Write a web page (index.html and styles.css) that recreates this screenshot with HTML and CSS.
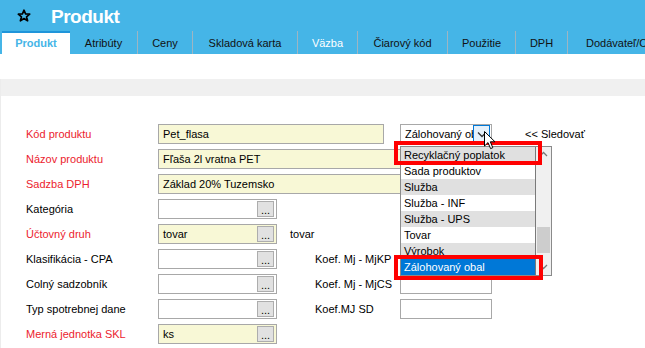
FILE: index.html
```html
<!DOCTYPE html>
<html lang="sk">
<head>
  <meta charset="UTF-8" />
  <meta name="viewport" content="width=device-width, initial-scale=1.0"/>
  <title>Produkt</title>
  <link rel="stylesheet" href="styles.css">
</head>
<body>
  <div class="header">
    <div class="title-bar">
      <svg class="star" width="14" height="13" viewBox="0 0 14 13">
        <polygon points="7,1.2 8.6,5 12.7,5.2 9.5,7.8 10.6,11.8 7,9.6 3.4,11.8 4.5,7.8 1.3,5.2 5.4,5" fill="none" stroke="#000" stroke-width="1.7" stroke-linejoin="round"/>
      </svg>
      <h1>Produkt</h1>
    </div>
    <div class="tabs">
      <div class="tab active">Produkt</div>
      <div class="tab">Atribúty</div>
      <div class="tab">Ceny</div>
      <div class="tab">Skladová karta</div>
      <div class="tab light">Väzba</div>
      <div class="tab">Čiarový kód</div>
      <div class="tab">Použitie</div>
      <div class="tab">DPH</div>
      <div class="tab">Dodávateľ/Odberateľ</div>
    </div>
  </div>

  <div class="content">
    <div class="band"></div>

    <div class="form">
      <div class="row">
        <span class="lbl req">Kód produktu</span>
        <div class="fld wide yellow">Pet_flasa</div>
        <div class="combo">
          <div class="combo-box yellow">
            <span class="combo-text">Zálohovaný obal</span>
            <span class="combo-btn">
              <svg width="10" height="7" viewBox="0 0 10 7"><polyline points="1,1.5 5,5.5 9,1.5" fill="none" stroke="#333" stroke-width="1.3"/></svg>
            </span>
          </div>

          <!-- open dropdown -->
          <div class="droplist">
            <ul class="items">
              <li class="alt">Recyklačný poplatok</li>
              <li>Sada produktov</li>
              <li class="alt">Služba</li>
              <li>Služba - INF</li>
              <li class="alt">Služba - UPS</li>
              <li>Tovar</li>
              <li class="alt">Výrobok</li>
              <li class="selected">Zálohovaný obal</li>
            </ul>
            <div class="scrollbar">
              <svg class="arrow-up" width="9" height="6" viewBox="0 0 9 6"><polyline points="1,5 4.5,1.5 8,5" fill="none" stroke="#777" stroke-width="1.3"/></svg>
              <div class="thumb"></div>
              <svg class="arrow-down" width="9" height="6" viewBox="0 0 9 6"><polyline points="1,1 4.5,4.5 8,1" fill="none" stroke="#777" stroke-width="1.3"/></svg>
            </div>
          </div>
          <div class="mark mark-top"></div>
          <div class="mark mark-bottom"></div>

          <svg class="cursor" width="12" height="19" viewBox="0 0 12 19">
            <path d="M0.5,0.5 L0.5,15 L4,11.6 L6.6,17.6 L8.8,16.7 L6.3,10.8 L11,10.8 Z" fill="#fff" stroke="#000" stroke-width="1" stroke-linejoin="round"/>
          </svg>
        </div>
        <span class="follow">&lt;&lt; Sledovať</span>
      </div>

      <div class="row">
        <span class="lbl req">Názov produktu</span>
        <div class="fld wider yellow">Fľaša 2l vratna PET</div>
      </div>

      <div class="row">
        <span class="lbl req">Sadzba DPH</span>
        <div class="fld wider yellow">Základ 20% Tuzemsko</div>
      </div>

      <div class="row">
        <span class="lbl">Kategória</span>
        <div class="fld pick"><span></span><span class="dots">...</span></div>
      </div>

      <div class="row">
        <span class="lbl req">Účtovný druh</span>
        <div class="fld pick yellow"><span>tovar</span><span class="dots">...</span></div>
        <span class="note">tovar</span>
      </div>

      <div class="row">
        <span class="lbl">Klasifikácia - CPA</span>
        <div class="fld pick"><span></span><span class="dots">...</span></div>
        <span class="koef">Koef. Mj - MjKP</span>
        <div class="fld small"></div>
      </div>

      <div class="row">
        <span class="lbl">Colný sadzobník</span>
        <div class="fld pick"><span></span><span class="dots">...</span></div>
        <span class="koef">Koef. Mj - MjCS</span>
        <div class="fld small"></div>
      </div>

      <div class="row">
        <span class="lbl">Typ spotrebnej dane</span>
        <div class="fld pick"><span></span><span class="dots">...</span></div>
        <span class="koef">Koef.MJ SD</span>
        <div class="fld small"></div>
      </div>

      <div class="row">
        <span class="lbl req">Merná jednotka SKL</span>
        <div class="fld pick yellow"><span>ks</span><span class="dots">...</span></div>
      </div>
    </div>
  </div>
</body>
</html>
```

FILE: styles.css
```css
body {
  margin: 0;
  overflow: hidden;
  font-family: "Liberation Sans", Arial, sans-serif;
  font-size: 11px;
  color: #000;
  background: #fff;
}

/* Header + tabs */
.header {
  background-color: #45b5e7;
}

.title-bar {
  height: 29px;
  padding: 2px 0 0 17px;
  display: flex;
  align-items: center;
}

.star {
  margin-top: -3px;
}

.title-bar h1 {
  margin: 0 0 0 20px;
  font-size: 19px;
  line-height: 1;
  letter-spacing: -0.5px;
  font-weight: bold;
  color: #fff;
}

.tabs {
  display: grid;
  grid-template-columns: 68px 67px 55px 105px 60px 90px 68px 52px 1fr;
  height: 23px;
  padding-left: 2px;
  white-space: nowrap;
}

.tab {
  box-sizing: border-box;
  height: 23px;
  padding-top: 2px;
  line-height: 21px;
  text-align: center;
  color: #111;
  border-left: 1px solid #9db5c3;
}

.tab.active,
.tab.active + .tab {
  border-left: none;
}

.tab.active {
  padding-top: 0;
  background: #fff;
  border-top: 2px solid #1f95da;
  color: #45b5e7;
  font-weight: bold;
}

.tab.light {
  color: #fff;
}

.tab:last-child {
  text-align: left;
  padding-left: 18px;
  overflow: hidden;
}

/* Content */
.content {
  border-left: 1px solid #ececec;
  min-height: 300px;
}

.band {
  margin-top: 25px;
  height: 17px;
  background: #f0f0f0;
}

.form {
  padding: 28px 0 0 25px;
}

.row {
  display: flex;
  align-items: center;
  height: 20px;
  margin-bottom: 5px;
}

.lbl {
  width: 132px;
  flex: none;
}

.lbl.req {
  color: #ec1c2e;
}

.fld {
  box-sizing: border-box;
  height: 20px;
  width: 119px;
  flex: none;
  padding: 0 4px;
  display: flex;
  align-items: center;
  border: 1px solid #a8a8a8;
  background: #fff;
  white-space: nowrap;
}

.fld.yellow {
  background: #f8f8d6;
}

.fld.wide {
  width: 226px;
}

.fld.wider {
  width: 334px;
}

.fld.small {
  width: 92px;
}

.fld.pick {
  justify-content: space-between;
  padding-right: 2px;
}

.dots {
  box-sizing: border-box;
  width: 17px;
  height: 16px;
  line-height: 16px;
  text-align: center;
  background: #e1e1e1;
  border: 1px solid #adadad;
}

.note {
  margin-left: 13px;
}

.koef {
  margin-left: 38px;
  width: 85px;
}

.follow {
  margin-left: 33px;
}

/* Combobox with open list */
.combo {
  position: relative;
  margin-left: 16px;
  width: 92px;
  height: 20px;
}

.combo-box {
  box-sizing: border-box;
  height: 20px;
  display: flex;
  align-items: center;
  padding: 0 1px 0 4px;
  border: 1px solid #a8a8a8;
}

.combo-text {
  flex: 1;
  overflow: hidden;
  white-space: nowrap;
}

.combo-btn {
  box-sizing: border-box;
  width: 17px;
  height: 18px;
  display: flex;
  align-items: center;
  justify-content: center;
  background: #e5f1fb;
  border: 1px solid #0078d7;
}

.droplist {
  position: absolute;
  left: 0;
  top: 22px;
  width: 152px;
  height: 130px;
  box-sizing: border-box;
  display: flex;
  background: #fff;
  border: 1px solid #8a8a8a;
}

.items {
  list-style: none;
  margin: 0;
  padding: 0;
  flex: 1;
  border-right: 1px solid #7a7a7a;
}

.items li {
  height: 16px;
  line-height: 16px;
  padding-left: 3px;
  white-space: nowrap;
}

.items li.alt {
  background: #e0e0e0;
}

.items li.selected {
  background: #0078d7;
  color: #fff;
}

.scrollbar {
  position: relative;
  width: 15px;
  background: #f0f0f0;
}

.arrow-up {
  position: absolute;
  left: 3px;
  top: 4px;
}

.arrow-down {
  position: absolute;
  left: 3px;
  bottom: 5px;
}

.thumb {
  position: absolute;
  left: 1px;
  right: 1px;
  top: 80px;
  height: 26px;
  background: #cdcdcd;
}

.mark {
  position: absolute;
  box-sizing: border-box;
  border: 4px solid #ff0000;
}

.mark-top {
  left: -6px;
  top: 17px;
  width: 148px;
  height: 24px;
}

.mark-bottom {
  left: -6px;
  top: 131px;
  width: 149px;
  height: 25px;
}

.cursor {
  position: absolute;
  left: 84px;
  top: 7px;
}
```
